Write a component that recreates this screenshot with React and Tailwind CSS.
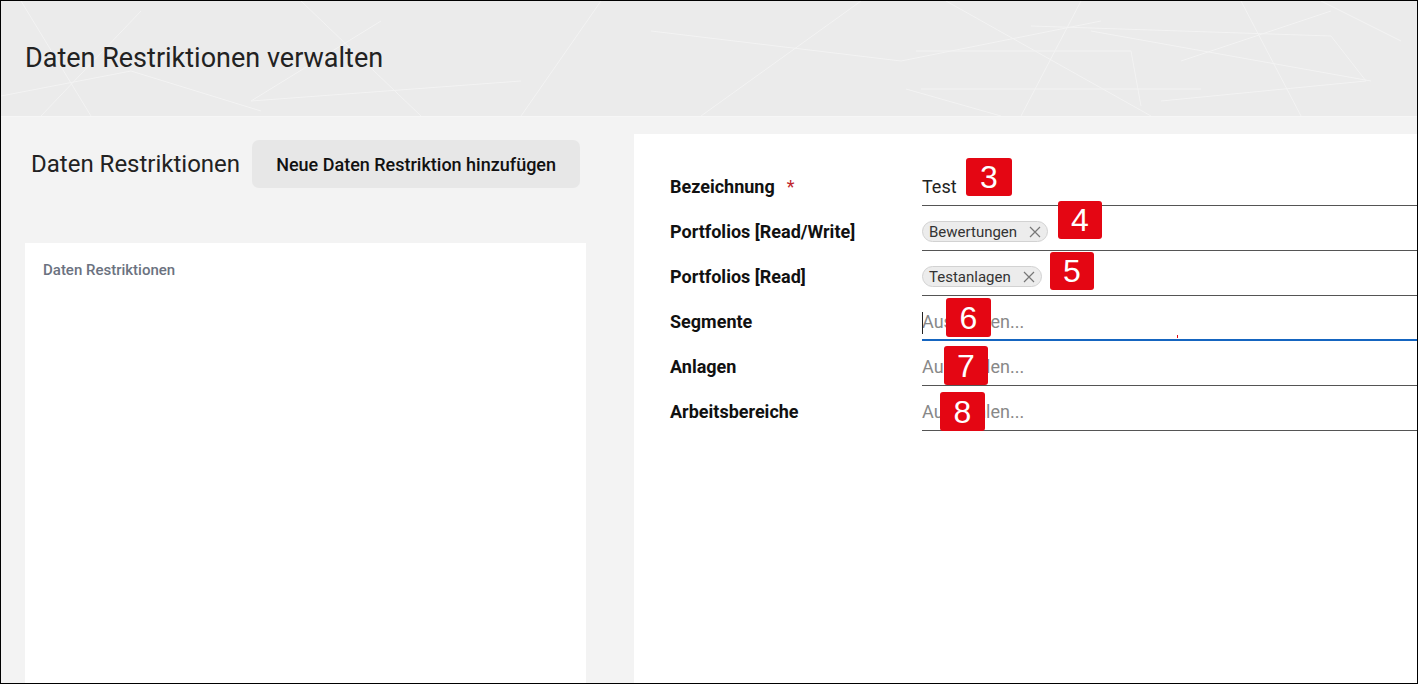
import React from "react";

const font = { fontFamily: "Roboto, 'Noto Sans', Arial, sans-serif" };

function Badge({ n, className }) {
  return (
    <div
      className={`absolute flex items-center justify-center rounded-[3px] bg-[#e40613] text-white text-[32px] leading-none ${className}`}
      style={{ fontFamily: "'Liberation Sans', Arial, sans-serif" }}
    >
      {n}
    </div>
  );
}

function Chip({ label }) {
  return (
    <span className="mb-[2px] inline-flex h-[21px] items-center gap-[12px] rounded-full border border-[#d2d2d2] bg-[#ececec] pl-[6px] pr-[6px] text-[15px] leading-[20px] text-[#333]">
      {label}
      <svg width="12" height="12" viewBox="0 0 12 12" className="text-[#777]">
        <path d="M1 1 L11 11 M11 1 L1 11" stroke="currentColor" strokeWidth="1.2" fill="none" />
      </svg>
    </span>
  );
}

function Row({ label, required, children, focused }) {
  return (
    <div className="flex h-[45px]">
      <div className="flex w-[252px] items-end pb-[7px] text-[18px] leading-[24px] font-bold text-[#111]">
        {label}
        {required && <span className="ml-[12px] text-[#c0272d] font-normal">*</span>}
      </div>
      <div
        className={`relative flex flex-1 items-end ${
          focused ? "border-b-2 border-[#1565c0] pb-[5px]" : "border-b border-[#555] pb-[6px]"
        }`}
      >
        {children}
      </div>
    </div>
  );
}

export default function App() {
  return (
    <div
      className="relative h-[684px] w-[1418px] overflow-hidden border border-black bg-[#f3f3f3]"
      style={font}
    >
      {/* Header */}
      <div className="relative flex h-[115px] items-center bg-[#ebebeb] pl-[24px]">
        <svg className="absolute inset-0 h-full w-full" viewBox="0 0 1416 115" preserveAspectRatio="none">
          <g stroke="#ffffff" strokeWidth="1" fill="none" opacity="0.4">
            <path d="M0 95 L130 70 L260 110" />
            <path d="M20 0 L90 115" />
            <path d="M140 10 L40 115" />
            <path d="M300 0 L420 115" />
            <path d="M380 20 L250 100 L520 80" />
            <path d="M600 0 L520 115" />
            <path d="M650 30 L900 60 L1100 20" />
            <path d="M700 115 L860 0" />
            <path d="M915 50 L1130 50 L1140 105" />
            <path d="M945 0 L1150 115" />
            <path d="M1080 0 L1020 115" />
            <path d="M1030 25 L1330 35 L1365 80 L1160 100" />
            <path d="M1090 30 L1370 80" />
            <path d="M1240 0 L1300 115" />
            <path d="M1180 60 L1330 10" />
            <path d="M1320 0 L1400 40" />
            <path d="M905 88 L1000 115" />
            <path d="M920 88 L1200 88" />
          </g>
        </svg>
        <h1 className="relative text-[27px] font-normal text-[#222]">Daten Restriktionen verwalten</h1>
      </div>

      {/* Body */}
      <div className="flex h-[567px] border-t border-[#f6f6f6]">
        {/* Left */}
        <div className="flex w-[633px] flex-col pl-[24px] pr-[48px]">
          <div className="flex items-center pt-[23px]">
            <div className="ml-[6px] text-[24px] text-[#222]">Daten Restriktionen</div>
            <button className="ml-[12px] h-[48px] w-[328px] rounded-[7px] bg-[#e7e7e7] text-[18px] font-medium text-[#111]">
              Neue Daten Restriktion hinzufügen
            </button>
          </div>
          <div className="mt-[55px] flex-1 bg-white px-[18px] pt-[16px]">
            <div className="text-[15px] font-medium text-[#6b7280]">Daten Restriktionen</div>
          </div>
        </div>

        {/* Right */}
        <div className="mt-[17px] flex-1 bg-white pl-[36px] pt-[27px]">
          <Row label="Bezeichnung" required>
            <span className="text-[18px] leading-[24px] text-[#222]">Test</span>
          </Row>
          <Row label="Portfolios [Read/Write]">
            <Chip label="Bewertungen" />
          </Row>
          <Row label="Portfolios [Read]">
            <Chip label="Testanlagen" />
          </Row>
          <Row label="Segmente" focused>
            <span className="absolute bottom-[5px] left-0 h-[22px] w-px bg-[#222]" />
            <span className="text-[18px] leading-[24px] text-[#888]">Auswählen...</span>
            <span className="absolute bottom-[1px] left-[255px] h-[3px] w-px bg-[#e40613]" />
          </Row>
          <Row label="Anlagen">
            <span className="text-[18px] leading-[24px] text-[#888]">Auswählen...</span>
          </Row>
          <Row label="Arbeitsbereiche">
            <span className="text-[18px] leading-[24px] text-[#888]">Auswählen...</span>
          </Row>
        </div>
      </div>

      {/* Annotation badges */}
      <Badge n="3" className="left-[965px] top-[157px] h-[38px] w-[46px]" />
      <Badge n="4" className="left-[1057px] top-[200px] h-[38px] w-[44px]" />
      <Badge n="5" className="left-[1049px] top-[251px] h-[38px] w-[44px]" />
      <Badge n="6" className="left-[945px] top-[297px] h-[39px] w-[45px]" />
      <Badge n="7" className="left-[943px] top-[345px] h-[39px] w-[44px]" />
      <Badge n="8" className="left-[939px] top-[391px] h-[39px] w-[45px]" />
    </div>
  );
}
